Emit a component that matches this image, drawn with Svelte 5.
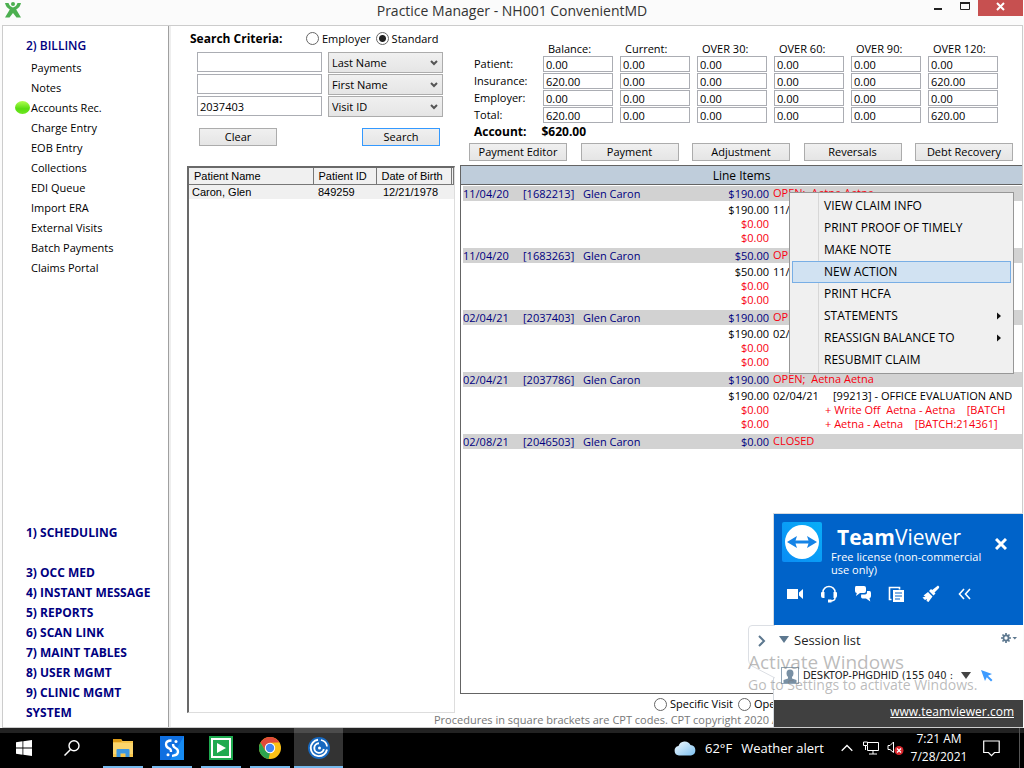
<script>
  const billing = ['Payments', 'Notes', 'Accounts Rec.', 'Charge Entry', 'EOB Entry', 'Collections', 'EDI Queue', 'Import ERA', 'External Visits', 'Batch Payments', 'Claims Portal'];
  const modules = ['3) OCC MED', '4) INSTANT MESSAGE', '5) REPORTS', '6) SCAN LINK', '7) MAINT TABLES', '8) USER MGMT', '9) CLINIC MGMT', 'SYSTEM'];
  const criteria = [
    { value: '', field: 'Last Name' },
    { value: '', field: 'First Name' },
    { value: '2037403', field: 'Visit ID' }
  ];
  const fields = ['Last Name', 'First Name', 'Visit ID'];
  const buckets = ['Balance:', 'Current:', 'OVER 30:', 'OVER 60:', 'OVER 90:', 'OVER 120:'];
  const aging = [
    { label: 'Patient:', values: ['0.00', '0.00', '0.00', '0.00', '0.00', '0.00'] },
    { label: 'Insurance:', values: ['620.00', '0.00', '0.00', '0.00', '0.00', '620.00'] },
    { label: 'Employer:', values: ['0.00', '0.00', '0.00', '0.00', '0.00', '0.00'] },
    { label: 'Total:', values: ['620.00', '0.00', '0.00', '0.00', '0.00', '620.00'] }
  ];
  const actions = ['Payment Editor', 'Payment', 'Adjustment', 'Reversals', 'Debt Recovery'];
  const visits = [
    { date: '11/04/20', id: '[1682213]', total: '$190.00', status: 'OPEN;  Aetna Aetna', charge: '11/04/20' },
    { date: '11/04/20', id: '[1683263]', total: '$50.00', status: 'OPEN;  Aetna Aetna', charge: '11/04/20' },
    { date: '02/04/21', id: '[2037403]', total: '$190.00', status: 'OPEN;  Aetna Aetna', charge: '02/04/21' },
    {
      date: '02/04/21', id: '[2037786]', total: '$190.00', status: 'OPEN;  Aetna Aetna', charge: '02/04/21',
      code: '[99213] - OFFICE EVALUATION AND',
      notes: ['+ Write Off  Aetna - Aetna    [BATCH', '+ Aetna - Aetna    [BATCH:214361]']
    },
    { date: '02/08/21', id: '[2046503]', total: '$0.00', status: 'CLOSED' }
  ];
  const menu = [
    { label: 'VIEW CLAIM INFO' },
    { label: 'PRINT PROOF OF TIMELY' },
    { label: 'MAKE NOTE' },
    { label: 'NEW ACTION', active: true },
    { label: 'PRINT HCFA' },
    { label: 'STATEMENTS', sub: true },
    { label: 'REASSIGN BALANCE TO', sub: true },
    { label: 'RESUBMIT CLAIM' }
  ];
</script>

<div class="screen">
  <header class="titlebar">
    <svg class="logo" width="18" height="18" viewBox="0 0 18 18" aria-hidden="true">
      <circle cx="9" cy="3" r="2" fill="#4caf50" />
      <path d="M1 2h3.500q1 3.500 4.500 4.500 3.500-1 4.500-4.500H17q-1 4.500-4.800 6.500L17 16.500h-4.500L9 12l-3.500 4.500H1L5.800 8.500Q2 6.500 1 2z" fill="#4caf50" />
    </svg>
    <h1>Practice Manager - NH001 ConvenientMD</h1>
    <div class="winctl">
      <button aria-label="Minimize"><svg width="30" height="16"><path d="M12 9h8" stroke="#222" stroke-width="2" /></svg></button>
      <button aria-label="Maximize"><svg width="26" height="16"><path d="M8.500 2v7.500h9V2" fill="none" stroke="#222" /><path d="M8 3h10" stroke="#222" stroke-width="2" /></svg></button>
      <button class="close" aria-label="Close"><svg width="45" height="16"><path d="M19 3l7 7M26 3l-7 7" stroke="#fff" stroke-width="2" /></svg></button>
    </div>
  </header>

  <main class="window">
    <nav class="sidebar">
      <h2>2) BILLING</h2>
      <ul class="sub">
        {#each billing as item}
          <li class:current={item === 'Accounts Rec.'}><a href="#top">{item}</a></li>
        {/each}
      </ul>
      <ul class="modules">
        <li class="spaced"><a href="#top">1) SCHEDULING</a></li>
        {#each modules as item}
          <li><a href="#top">{item}</a></li>
        {/each}
      </ul>
    </nav>

    <div class="work">
      <div class="columns">
        <section class="search">
          <div class="mode">
            <strong>Search Criteria:</strong>
            <label><input type="radio" name="mode" />Employer</label>
            <label><input type="radio" name="mode" checked />Standard</label>
          </div>
          <div class="criteria">
            {#each criteria as row, i}
              <input type="text" value={row.value} aria-label="Search value {i + 1}" />
              <select aria-label="Search field {i + 1}" value={row.field}>
                {#each fields as f}<option>{f}</option>{/each}
              </select>
            {/each}
          </div>
          <div class="buttons">
            <button class="btn">Clear</button>
            <button class="btn primary">Search</button>
          </div>
          <div class="patients">
            <table>
              <colgroup><col class="p1" /><col class="p2" /><col class="p3" /><col /></colgroup>
              <thead><tr><th>Patient Name</th><th>Patient ID</th><th>Date of Birth</th><th></th></tr></thead>
              <tbody><tr><td>Caron, Glen</td><td>849259</td><td>12/21/1978</td><td></td></tr></tbody>
            </table>
          </div>
        </section>

        <section class="account">
          <table class="aging">
            <thead>
              <tr><th></th>{#each buckets as b}<th>{b}</th>{/each}</tr>
            </thead>
            <tbody>
              {#each aging as row}
                <tr>
                  <th>{row.label}</th>
                  {#each row.values as v, i}<td><input type="text" value={v} aria-label="{row.label} {buckets[i]}" /></td>{/each}
                </tr>
              {/each}
            </tbody>
          </table>
          <div class="total"><span>Account:</span><span>$620.00</span></div>
          <div class="actions">
            {#each actions as a}<button class="btn">{a}</button>{/each}
          </div>
          <div class="items">
            <h3>Line Items</h3>
            <table>
              <colgroup><col class="c1" /><col class="c1" /><col class="c2" /><col class="c3" /><col /></colgroup>
              <tbody>
                {#each visits as v}
                  <tr class="visit">
                    <td>{v.date}</td><td>{v.id}</td><td>Glen Caron</td><td class="num">{v.total}</td><td class="status">{v.status}</td>
                  </tr>
                  {#if v.charge}
                    <tr class="charge">
                      <td colspan="3"></td><td class="num">{v.total}</td>
                      <td class="desc"><div><span class="when">{v.charge}</span>{v.code ?? ''}</div></td>
                    </tr>
                    {#each [0, 1] as n}
                      <tr class="adjust" class:last={n === 1}>
                        <td colspan="3"></td><td class="num">$0.00</td><td class="desc note"><div>{v.notes?.[n] ?? ''}</div></td>
                      </tr>
                    {/each}
                  {/if}
                {/each}
              </tbody>
            </table>
          </div>
          <div class="scope">
            <label><input type="radio" name="scope" />Specific Visit</label>
            <label><input type="radio" name="scope" />Open</label>
          </div>
        </section>
      </div>
      <p class="legal">Procedures in square brackets are CPT codes. CPT copyright 2020 AMA</p>
    </div>
  </main>

  <div class="menu" role="menu">
    {#each menu as m}
      <button role="menuitem" class:active={m.active}>{m.label}{#if m.sub}<svg width="5" height="8" viewBox="0 0 5 8" aria-hidden="true"><path d="M0 0.500l4 3.500-4 3.500z" fill="#111" /></svg>{/if}</button>
    {/each}
  </div>

  <aside class="tv">
    <svg class="tab" width="27" height="54" viewBox="0 0 27 54" aria-hidden="true">
      <path d="M27 .5H4Q.5 .5 .5 4V35Q.5 39 4 41L27 53" fill="#fff" stroke="#dcdfe4" />
      <path d="M11 11l5 5-5 5" fill="none" stroke="#5d788f" stroke-width="2" />
    </svg>
    <div class="blue">
      <div class="brand">
        <svg width="40" height="40" viewBox="0 0 40 40" aria-hidden="true">
          <defs><linearGradient id="tvg" x1="0" y1="1" x2="1" y2="0"><stop offset="0" stop-color="#0a8df5" /><stop offset="1" stop-color="#08aef8" /></linearGradient></defs>
          <rect width="40" height="40" rx="2" fill="url(#tvg)" />
          <circle cx="20" cy="20" r="17" fill="#fff" />
          <path d="M5 20l10-6-1.500 4.500h13L25 14l10 6-10 6 1.500-4.500h-13L15 26z" fill="#1583e6" />
        </svg>
        <div class="words">
          <div class="name"><b>Team</b>Viewer</div>
          <div class="lic">Free license (non-commercial use only)</div>
        </div>
        <button aria-label="Close TeamViewer"><svg width="12" height="12" viewBox="0 0 12 12"><path d="M1 1l10 10M11 1L1 11" stroke="#fff" stroke-width="3" /></svg></button>
      </div>
      <div class="tools">
        <button aria-label="Video"><svg width="18" height="18" viewBox="0 0 18 18"><path d="M1 4h11v10H1zM13 7.500L17 4v10l-4-3.500z" fill="#fff" /></svg></button>
        <button aria-label="Audio"><svg width="18" height="18" viewBox="0 0 18 18"><path d="M3 8V7a6 5.500 0 0 1 12 0v6q0 3-5 3" fill="none" stroke="#fff" stroke-width="1.500" /><path d="M1 8q0-1 1-1h2.500v6H3q-2 0-2-2zM17 8q0-1-1-1h-2.500v6H15q2 0 2-2zM8 14.500h3.500v3H8z" fill="#fff" /></svg></button>
        <button aria-label="Chat"><svg width="18" height="18" viewBox="0 0 18 18"><path d="M2 1h8q2 0 2 2v3q0 2-2 2H6l-4 3 .8-3Q1 8 1 6V3q0-2 1-2z" fill="#fff" /><path d="M13 6h2.500Q17 6 17 8v3q0 2-1.500 2l.8 3.500L12 13.500H8.500Q7 13.500 7 11.500l.2-2H11q2 0 2-2z" fill="#fff" /></svg></button>
        <button aria-label="Files"><svg width="18" height="18" viewBox="0 0 18 18"><path d="M3.500 14.500h-2v-12h10v2" fill="none" stroke="#fff" stroke-width="1.600" /><path d="M5 5h11v12H5z" fill="#fff" /><path d="M7 8h7M7 11h7M7 14h5M3 5h2M3 8h2M3 11h2" stroke="#0063c9" stroke-width="1.200" /></svg></button>
        <button aria-label="Whiteboard"><svg width="18" height="18" viewBox="0 0 18 18"><path d="M16 .5q2 1 1 2.500L12.500 7.500l1 1-2 2L7 6l2-2 1.200 1z" fill="#fff" /><path d="M6 7l4.500 4.500-4 5.500-2-1 .5-2-2 1-2.500-2.500 3-1-2-1z" fill="#fff" /></svg></button>
        <button aria-label="Collapse"><svg width="18" height="18" viewBox="0 0 18 18"><path d="M8 4L3.500 9 8 14M14 4L9.500 9l4.500 5" fill="none" stroke="#fff" stroke-width="1.600" /></svg></button>
      </div>
    </div>
    <div class="sessions">
      <div class="head">
        <svg width="10" height="7" viewBox="0 0 10 7" aria-hidden="true"><path d="M0 0h10L5 7z" fill="#5d788f" /></svg>
        <span>Session list</span>
        <svg class="gear" width="16" height="10" viewBox="0 0 16 10" aria-hidden="true">
          <circle cx="5" cy="5" r="2.600" fill="none" stroke="#5d788f" stroke-width="1.800" />
          <path d="M5 0v2M5 8v2M0 5h2M8 5h2M1.500 1.500l1.300 1.300M7.200 7.200l1.300 1.300M8.500 1.500L7.200 2.800M2.800 7.200L1.500 8.500" stroke="#5d788f" stroke-width="1.700" />
          <path d="M11.500 4H16l-2.200 2.500z" fill="#5d788f" />
        </svg>
      </div>
      <div class="peer">
        <svg width="18" height="17" viewBox="0 0 18 17" aria-hidden="true"><rect x=".5" y=".5" width="17" height="16" fill="#fff" stroke="#90a4b5" /><path d="M9 2.500q3.500 0 3.500 4 0 2-1.500 3.500v1.500l4.500 1.500V16h-13v-3L7 11.500V10Q5.500 8.500 5.500 6.500q0-4 3.500-4z" fill="#7990a4" /></svg>
        <span>DESKTOP-PHGDHID (155 040 :</span>
        <svg width="10" height="7" viewBox="0 0 10 7" aria-hidden="true"><path d="M0 0h10L5 7z" fill="#444" /></svg>
        <svg width="12" height="12" viewBox="0 0 12 12" aria-hidden="true"><path d="M0 0l11 4-4 1.800L11.500 10 10 11.500 5.800 7.200 4 11z" fill="#3d9bff" /></svg>
      </div>
    </div>
    <div class="foot"><a href="#top">www.teamviewer.com</a></div>
  </aside>

  <div class="watermark">
    <div class="big">Activate Windows</div>
    <div>Go to Settings to activate Windows.</div>
  </div>

  <footer class="taskbar">
    <div class="pinned">
      <button class="app" aria-label="Start"><svg width="16" height="16" viewBox="0 0 16 16"><path d="M0 2.200L6.500 1.300V7.500H0zM7.300 1.200L16 0v7.500H7.300zM0 8.500h6.500v6.200L0 13.800zM7.300 8.500H16V16l-8.700-1.200z" fill="#fff" /></svg></button>
      <button class="app" aria-label="Search"><svg width="16" height="16" viewBox="0 0 16 16"><circle cx="10" cy="5.800" r="5" fill="none" stroke="#fff" stroke-width="1.400" /><path d="M6.500 9.500L.5 15.500" stroke="#fff" stroke-width="1.500" /></svg></button>
    </div>
    <button class="app run" aria-label="File Explorer"><svg width="22" height="20" viewBox="0 0 22 20"><path d="M1 1h8l1.500 2H21v16H1z" fill="#f7c54a" /><path d="M1 1h8l1 2-1 1H1z" fill="#dc9a16" /><path d="M1 5h20v11H1z" fill="#fbd56c" /><path d="M4.500 19v-7q0-1 1-1h11q1 0 1 1v7h-4v-3.500h-5V19z" fill="#3d97e0" /></svg></button>
    <button class="app run" aria-label="Sync"><svg width="24" height="24" viewBox="0 0 24 24"><rect width="24" height="24" fill="#0f6fe0" /><path d="M24 0v24H10z" fill="#168bf2" /><path d="M11.500 4.500Q6 4.500 6 8.300 6.200 11.300 9 12.300 11.200 13.300 11 16M13 8q0 3 2.500 4 2.700 1.200 2.500 4-.5 3.500-6 3.800" fill="none" stroke="#fff" stroke-width="2.300" /><circle cx="16" cy="5.500" r="1.500" fill="#fff" /><circle cx="8" cy="18.800" r="1.500" fill="#fff" /></svg></button>
    <button class="app run" aria-label="Player"><svg width="24" height="24" viewBox="0 0 24 24"><rect width="24" height="24" fill="#1faa50" /><rect x="3" y="3" width="18" height="18" fill="none" stroke="#fff" stroke-width="2" /><path d="M8 7l9 5-9 5z" fill="#fff" /></svg></button>
    <button class="app run" aria-label="Chrome"><svg width="22" height="22" viewBox="0 0 22 22"><circle cx="11" cy="11" r="11" fill="#fbc116" /><path d="M1.500 5.500A11 11 0 0 1 20.500 5.500L11 6l-4.800 7.800z" fill="#e04a3a" /><path d="M1.500 5.500L6.300 13.800 11 16l-1.500 6A11 11 0 0 1 1.500 5.500z" fill="#2da44e" /><path d="M11 5.800h9.600L15 14z" fill="#fbc116" /><circle cx="11" cy="11" r="5.200" fill="#fff" /><circle cx="11" cy="11" r="4.200" fill="#4285f4" /></svg></button>
    <button class="app run focus" aria-label="Remote session"><svg width="22" height="22" viewBox="0 0 22 22"><circle cx="11" cy="11" r="11" fill="#1668c0" /><path d="M10 2.800A8.200 8.200 0 1 0 19 12.500M11 6.300A4.800 4.800 0 1 0 15.800 12" fill="none" stroke="#fff" stroke-width="1.900" /><path d="M13 3q5.500 1.200 6 6.500" fill="none" stroke="#fff" stroke-width="1.700" /><circle cx="11.500" cy="11" r="1.500" fill="#fff" /></svg></button>
    <div class="tray">
      <svg width="22" height="16" viewBox="0 0 22 16" aria-hidden="true"><defs><linearGradient id="cl" x1="0" y1="0" x2="1" y2="1"><stop offset="0" stop-color="#f4fbff" /><stop offset="1" stop-color="#7cc0f0" /></linearGradient></defs><path d="M5 15.500a4.800 4.800 0 0 1-.5-9.500A6.500 6.500 0 0 1 16.500 5a5.300 5.300 0 0 1 .5 10.500z" fill="url(#cl)" /></svg>
      <span class="weather"><span>62°F</span><span>Weather alert</span></span>
      <svg width="12" height="8" viewBox="0 0 12 8" aria-hidden="true"><path d="M.7 6.800L6 1.500l5.300 5.300" fill="none" stroke="#fff" stroke-width="1.300" /></svg>
      <svg class="net" width="16" height="14" viewBox="0 0 16 14" aria-hidden="true"><path d="M5 1.500h10.500v8H4.500V5M10 9.500V13M6 13h8M.5 1h4v3.500h-4zM2.500 4.500V9" fill="none" stroke="#fff" /></svg>
      <svg class="vol" width="17" height="14" viewBox="0 0 17 14" aria-hidden="true"><path d="M1 4.500h2L6.500 1v10.500L3 8.500H1z" fill="none" stroke="#fff" /><circle cx="12" cy="9.500" r="4.500" fill="#d9262c" /><path d="M10 7.500l4 4M14 7.500l-4 4" stroke="#fff" stroke-width="1.200" /></svg>
      <span class="clock">7:21 AM<br />7/28/2021</span>
      <svg width="17" height="17" viewBox="0 0 17 17" aria-hidden="true"><path d="M.7 1h15.500v11.500h-4.700L8.500 15.700 5.500 12.500H.7z" fill="none" stroke="#fff" stroke-width="1.200" /></svg>
    </div>
    <div class="peek"></div>
  </footer>
</div>

<style>
  :global(body) { margin: 0; background: #fbfbfb; }
  .screen { position: relative; display: flex; flex-direction: column; min-height: 100vh; overflow: hidden; background: #fbfbfb; color: #000; font: 11px/14px "Open Sans", "Noto Sans", sans-serif; }
  .screen *, .screen *::before { box-sizing: border-box; }
  h1, h2, h3, p, ul { margin: 0; padding: 0; font-weight: normal; list-style: none; }
  a { color: inherit; text-decoration: none; }
  button { padding: 0; border: 0; background: none; color: inherit; font: inherit; }
  svg { display: block; flex: none; }
  input, select { font: inherit; color: inherit; }
  table { border-collapse: collapse; table-layout: fixed; }
  th, td { padding: 0; font-weight: normal; text-align: left; white-space: pre; }

  .titlebar { display: grid; grid-template-columns: 1fr auto 1fr; align-items: start; height: 25px; flex: none; }
  .logo { margin: 1px 0 0 4px; }
  h1 { font-size: 14px; line-height: 22px; color: #333; }
  .winctl { display: flex; justify-content: end; padding-right: 1px; }
  .close { background: #c75050; }

  .window { display: flex; flex: 1; margin: 0 1px 0 2px; border: 1px solid #ccc; background: #fff; }
  .sidebar { display: flex; flex-direction: column; width: 166px; padding: 10px 0 4px 23px; border-right: 1px solid #a0a0a0; box-shadow: 2px 0 #eee; font-size: 11px; line-height: 20px; }
  h2, .modules { color: #000080; font-size: 12px; font-weight: 700; line-height: 20px; }
  h2 { margin-bottom: 2px; font-weight: 600; }
  .sub { padding-left: 5px; }
  .current { position: relative; }
  .current::before { content: ""; position: absolute; left: -16px; top: 3px; width: 15px; height: 13px; border-radius: 50%; background: linear-gradient(#b0ff50, #58dc10 60%, #6fe822); }
  .modules { margin-top: auto; }
  .spaced { margin-bottom: 20px; }

  .work { display: flex; flex: 1; flex-direction: column; min-width: 0; }
  .columns { display: flex; flex: 1; min-width: 0; }
  .search { display: flex; flex-direction: column; width: 268px; margin: 0 5px 0 18px; flex: none; }
  .mode { display: flex; align-items: center; height: 25px; padding-left: 3px; }
  .mode strong { width: 116px; font-size: 12px; }
  label { display: flex; align-items: center; gap: 3px; margin-right: 5px; white-space: nowrap; }
  input[type="radio"] { appearance: none; width: 13px; height: 13px; margin: 0; border: 1px solid #666; border-radius: 50%; background: #fff; }
  input[type="radio"]:checked { background: radial-gradient(#222 0 3px, #fff 4px); }
  .criteria { display: grid; grid-template-columns: 125px 115px; column-gap: 6px; grid-auto-rows: 22px; padding: 1px 0 0 10px; }
  input[type="text"] { width: 100%; height: 20px; padding: 0 2px; border: 1px solid #abadb3; background: #fff; }
  select { appearance: none; height: 21px; padding: 0 3px; border: 1px solid #acacac; border-radius: 0; background: url("data:image/svg+xml,%3Csvg xmlns='http://www.w3.org/2000/svg' width='8' height='6'%3E%3Cpath d='M1 1l3 3 3-3' fill='none' stroke='%23555' stroke-width='2'/%3E%3C/svg%3E") right 4px center no-repeat, linear-gradient(#f0f0f0, #e5e5e5); }
  .buttons { display: flex; justify-content: space-between; padding: 10px 15px 0 12px; }
  .btn { width: 78px; height: 18px; border: 1px solid #acacac; background: linear-gradient(#f0f0f0, #e5e5e5); line-height: 16px; white-space: nowrap; }
  .primary { border-color: #3399ff; }
  .patients { flex: 1; margin: 20px 0 1px; border: 1px solid #ddd; border-top: 2px solid #696969; border-left: 2px solid #696969; font-family: "Liberation Sans", Arial, sans-serif; }
  .patients table { width: 100%; }
  .p1 { width: 124px; }
  .p2 { width: 63px; }
  .p3 { width: 75px; }
  .patients th { height: 16px; padding: 1px 0 0 5px; border-right: 1px solid #777; border-bottom: 1px solid #777; background: #f0f0f0; }
  .patients td { height: 15px; padding-left: 3px; background: #f0f0f0; }
  .patients td:nth-child(3) { padding-left: 7px; }
  .patients td:nth-child(2) { padding-left: 5px; }

  .account { display: flex; flex: 1; flex-direction: column; min-width: 0; }
  .aging { width: 531px; margin: 16px 0 0 14px; }
  .aging thead th { width: 77px; height: 14px; padding-left: 5px; line-height: 14px; }
  .aging thead th:first-child { width: 69px; padding: 0; }
  .aging tbody th, .aging td { height: 17px; padding: 0 7px 0 0; line-height: 16px; vertical-align: top; }
  .aging tbody th { padding: 0; }
  .aging input[type="text"] { display: block; width: 70px; height: 16px; line-height: 14px; }
  .total { display: flex; gap: 15px; margin: 0 0 3px 14px; font-size: 12px; font-weight: 700; line-height: 16px; }
  .actions { display: flex; justify-content: space-between; padding: 0 9px; }
  .actions .btn { width: 98px; }
  .items { flex: 1; margin-top: 4px; border: 1px solid #646464; border-width: 1px 0 1px 1px; }
  h3 { height: 19px; padding-top: 1px; border-bottom: 1px solid #646464; background: #bfcddb; font-size: 12px; line-height: 18px; text-align: center; }
  .items table { width: calc(100% - 2px); margin: 1px 0 0 2px; }
  .c1 { width: 60px; }
  .c2 { width: 120px; }
  .c3 { width: 66px; }
  .items td { height: 14px; line-height: 14px; }
  .items .visit td { height: 15px; background: #d2d2d2; color: #000080; line-height: 15px; }
  .items .num { text-align: right; }
  .items .visit .status { padding-left: 4px; color: #f8000f; line-height: 13px; vertical-align: top; }
  .charge td { padding-top: 2px; }
  .desc { padding-left: 4px; }
  .desc div { margin-right: 8px; height: 14px; overflow: hidden; }
  .when { display: inline-block; width: 60px; }
  .adjust { color: #f8000f; }
  .note { padding-left: 56px; }
  .adjust.last td { padding-bottom: 3px; }
  .scope { display: flex; align-items: center; height: 20px; padding-left: 194px; }
  .legal { height: 14px; margin-top: -1px; padding-left: 265px; color: #777; white-space: nowrap; }

  .menu { position: absolute; top: 192px; right: 10px; width: 225px; padding: 2px; border: 1px solid #979797; background: linear-gradient(to right, #f0f0f0 28px, #d7d7d7 28px, #d7d7d7 29px, #f0f0f0 29px); font-size: 12px; }
  .menu button { display: flex; align-items: center; justify-content: space-between; width: 100%; height: 22px; padding: 0 8px 0 31px; border: 1px solid transparent; white-space: nowrap; }
  .menu .active { border-color: #78aee5; background: #d1e2f2; }

  .tv { position: absolute; right: 1px; bottom: 41px; width: 250px; border: 1px solid #d5dae0; border-width: 1px 0 0 1px; background: #fff; }
  .tab { position: absolute; left: -26px; top: 111px; }
  .blue { height: 111px; padding: 8px; background: #0063c9; color: #fff; }
  .brand { display: flex; height: 57px; }
  .words { flex: 1; padding-left: 9px; }
  .name { padding-left: 6px; font-size: 21px; line-height: 30px; height: 28px; }
  .lic { line-height: 13px; height: 28px; width: 160px; }
  .brand button { align-self: start; margin: 16px 8px 0 0; }
  .tools { display: flex; gap: 16px; padding: 6px 4px; }
  .sessions { height: 75px; padding: 0 7px 0 5px; }
  .head { display: flex; align-items: center; gap: 5px; height: 29px; font-size: 13px; color: #222; }
  .gear { margin: 0 -1px 3px auto; }
  .peer { display: flex; align-items: center; height: 43px; padding: 0 23px 0 2px; color: #222; font-family: "DejaVu Sans Condensed", "Liberation Sans", sans-serif; }
  .peer span { flex: 1; margin: 0 8px 0 4px; overflow: hidden; white-space: nowrap; }
  .peer svg + svg { margin-left: 10px; }
  .foot { height: 27px; padding-right: 9px; background: #404040; color: #fff; font-size: 12px; line-height: 24px; text-align: right; }
  .foot a { text-decoration: underline; }

  .watermark { position: absolute; right: 40px; bottom: 73px; width: 236px; color: rgba(120, 120, 120, 0.5); font-size: 14px; line-height: 20px; white-space: nowrap; pointer-events: none; }
  .big { font-size: 19px; line-height: 26px; }

  .taskbar { display: flex; height: 40px; flex: none; background: linear-gradient(#222 5px, #000 5px); color: #fff; }
  .pinned { display: flex; margin-right: 2px; }
  .app { display: flex; align-items: center; justify-content: center; width: 49px; }
  .pinned .app { width: 48px; }
  .run { background: linear-gradient(#76b9ed, #76b9ed) center bottom / 40px 2px no-repeat; }
  .focus { background: linear-gradient(#76b9ed, #76b9ed) center bottom / 100% 2px no-repeat, linear-gradient(#4c4c4c 5px, #333 5px); }
  .tray { display: flex; align-items: center; margin-left: auto; padding-right: 19px; font-size: 12px; }
  .peek { width: 5px; border-left: 1px solid #555; }
  .weather { display: flex; gap: 9px; margin: 0 17px 0 9px; font-size: 13px; }
  .net { margin-left: 10px; }
  .vol { margin-left: 8px; }
  .clock { width: 70px; margin-right: 9px; font-size: 12px; line-height: 18px; text-align: center; }
</style>
